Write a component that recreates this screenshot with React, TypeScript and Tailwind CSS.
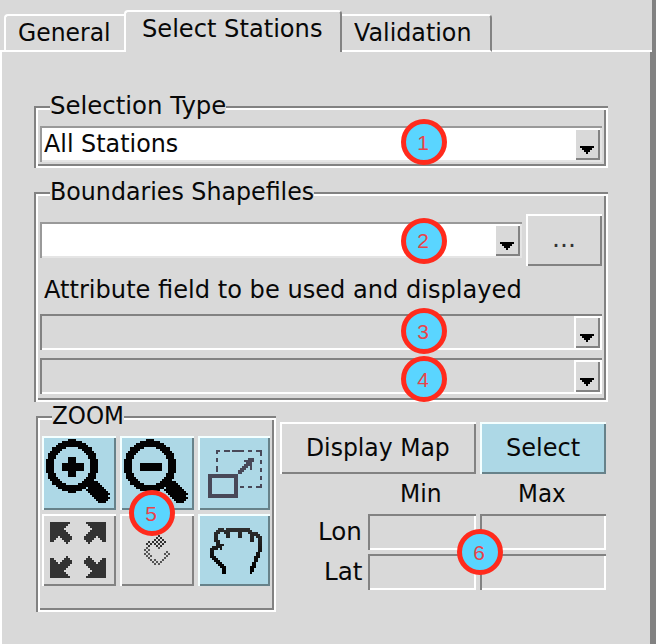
import React from "react";

const raised = "shadow-[inset_2px_2px_0_#fff,inset_-2px_-2px_0_#828282] bg-[#d9d9d9]";
const raisedBlue = "shadow-[inset_2px_2px_0_#f4ffff,inset_-2px_-2px_0_#67828a] bg-[#add8e6]";
const sunken = "shadow-[inset_2px_2px_0_#828282,inset_-2px_-2px_0_#fff] bg-[#d9d9d9]";
const sunkenWhite = "shadow-[inset_2px_2px_0_#999999,inset_-2px_-2px_0_#e5e5e5] bg-white";

function Label({ text, width, className = "" }: { text: string; width: number; className?: string }) {
  const ref = React.useRef<HTMLSpanElement>(null);
  const [scale, setScale] = React.useState(1);
  React.useLayoutEffect(() => {
    const el = ref.current;
    if (el) setScale(width / el.offsetWidth);
  }, [text, width]);
  return (
    <span className={`block h-7 whitespace-nowrap leading-7 ${className}`} style={{ width }}>
      <span ref={ref} className="inline-block origin-left" style={{ transform: `scaleX(${scale})` }}>{text}</span>
    </span>
  );
}

function Frame({ title, titleWidth, className, children }: { title: string; titleWidth: number; className: string; children: React.ReactNode }) {
  return (
    <section className={`relative shadow-[inset_2px_2px_0_#828282,inset_-2px_-2px_0_#fff,inset_4px_4px_0_#fff,inset_-4px_-4px_0_#828282] ${className}`}>
      <div className="absolute left-4 -top-[14px] h-5 bg-[#d9d9d9]">
        <Label text={title} width={titleWidth} />
      </div>
      {children}
    </section>
  );
}

function Combo({ value, enabled, className }: { value?: string; enabled?: boolean; className: string }) {
  return (
    <div className={`flex h-9 justify-between p-[2px] pl-1 ${enabled ? sunkenWhite : sunken} ${className}`}>
      <div className="pt-[2px]">{value && <Label text={value} width={134} />}</div>
      <div className={`flex h-8 w-[26px] items-end justify-center pb-[6px] ${raised}`}>
        <svg width="14" height="8" shapeRendering="crispEdges"><path d="M0 0h14v2h-2v2h-2v2h-2v2H6V6H4V4H2V2H0z" /></svg>
      </div>
    </div>
  );
}

const CELL = 2;

function Magnifier({ plus }: { plus?: boolean }) {
  const cells: React.ReactNode[] = [];
  for (let y = 0; y < 72; y += CELL) {
    for (let x = 0; x < 72; x += CELL) {
      const cx = x + 1, cy = y + 1;
      const d = Math.hypot(cx - 30, cy - 29);
      const along = (cx + cy - 92) / Math.SQRT2;
      const across = Math.abs(cx - cy - 1) / Math.SQRT2;
      const ring = d > 18.7 && d < 26.2;
      const handle = along > -2 && along < 26 && across < (along < 4 ? 4.5 : along > 23 ? 4.5 : 6.5);
      const bar = cx > 20 && cx < 42 && cy > 26 && cy < 34;
      const stem = !!plus && cx > 26 && cx < 34 && cy > 20 && cy < 40;
      if (ring || handle || bar || stem) cells.push(<rect key={`${x}-${y}`} x={x} y={y} width="2" height="2" />);
    }
  }
  return <svg width="72" height="72" shapeRendering="crispEdges" fill="#030303">{cells}</svg>;
}

// Each row lists the filled column ranges.
const FIST: number[][][] = [
  [[4, 6], [8, 19]], [[3, 20]], [[2, 4], [7, 9], [14, 15], [19, 23]], [[2, 3], [8, 9], [14, 15], [20, 24]],
  [[2, 3], [8, 9], [14, 15], [20, 21], [23, 25]], [[2, 3], [20, 21], [24, 25]], [[2, 4], [20, 21], [24, 25]],
  [[3, 4], [24, 25]], [[3, 6], [24, 25]], [[1, 5], [24, 25]], [[0, 3], [5, 5], [24, 25]], [[0, 1], [24, 25]],
  [[0, 1], [23, 24]], [[0, 1], [23, 24]], [[0, 2], [22, 24]], [[1, 3], [22, 23]], [[2, 4], [22, 23]], [[3, 5], [21, 22]],
  [[4, 6], [21, 22]], [[5, 7], [20, 22]], [[6, 7], [20, 21]], [[6, 7], [20, 21]], [[6, 7], [20, 20]],
];
const TURN: number[][] = [[7], [6, 8], [5, 7, 9], [2, 4, 6, 8, 10], [1, 3, 5, 7, 9], [2, 6, 8], [1, 7], [0, 2], [1, 11], [0, 2, 10, 12], [1, 3, 11], [2, 10], [3, 5, 9], [4, 6, 8], [5, 7]];

function Fist() {
  return (
    <svg width="52" height="46" shapeRendering="crispEdges">
      {FIST.map((row, y) => row.map(([a, b]) => {
        const v = Math.max(0, Math.round(46 - y * 2.3));
        return <rect key={`${y}-${a}`} x={a * 2} y={y * 2} width={(b - a + 1) * 2} height="2" fill={`rgb(${v},${v},${v})`} />;
      }))}
    </svg>
  );
}

function Refresh() {
  return (
    <svg width="26" height="30" shapeRendering="crispEdges">
      {TURN.map((row, y) => row.map((x) => <rect key={`${y}-${x}`} x={x * 2} y={y * 2} width="2" height="2" fill={y < 6 ? "#303030" : "#555"} />))}
    </svg>
  );
}

const ARROW = "M0 0H20V2H18V4H16V6H14V8H16V10H18V12H20V14H22V18H20V20H18V22H16V20H14V18H12V16H10V14H8V16H6V18H4V20H0Z";

function FitAll() {
  return (
    <svg width="56" height="56" shapeRendering="crispEdges" fill="#333">
      <path d={ARROW} />
      <path d={ARROW} transform="translate(56 0) scale(-1 1)" />
      <path d={ARROW} transform="translate(0 56) scale(1 -1)" />
      <path d={ARROW} transform="translate(56 56) scale(-1 -1)" />
    </svg>
  );
}

function Extent() {
  return (
    <svg width="54" height="48" shapeRendering="crispEdges" fill="#484858">
      <path d="M8 0h4v2H8zM16 0h6v2h-6zM24 0h6v2h-6zM30 0h6v2h-6zM40 0h4v2h-4zM48 0h6v2h-6zM52 2h2v4h-2zM52 10h2v4h-2zM52 18h2v4h-2zM52 26h2v4h-2zM52 34h2v4h-2zM48 36h4v2h-4zM40 36h4v2h-4zM32 36h4v2h-4zM8 0h2v4H8zM8 8h2v4H8zM8 16h2v6H8z" />
      <path fillRule="evenodd" d="M0 24h30v24H0zM4 28v16h22V28z" />
      <path d="M30 20h2v-2h2v-2h2v-2h2v-2h-2v-2h4V8h6v4h-2v8h-2v-4h-2v2h-2v2h-2v2h-2v2h-4z" />
    </svg>
  );
}

function Marker({ n, className }: { n: number; className: string }) {
  return (
    <div className={`absolute flex h-[46px] w-[46px] items-center justify-center rounded-full border-[5px] border-[#ff2b1d] bg-[#5ad5ff] pr-px font-['Liberation_Sans',sans-serif] text-[21px] leading-none text-[#e8434a] ${className}`}>
      {n}
    </div>
  );
}

export default function App() {
  return (
    <main className="relative flex h-[644px] w-[656px] overflow-hidden bg-[#d9d9d9] font-['DejaVu_Sans',sans-serif] text-[24px] text-[#080808]">
      <div className="flex w-[652px] flex-col">
        <nav className="flex h-[52px] shrink-0 items-end">
          <div className="h-[2px] w-1 self-end bg-white" />
          <div className="h-[38px] w-[120px] rounded-tl-[4px] border-b-2 border-l-2 border-t-2 border-white pl-[12px] pt-[3px]">
            <Label text="General" width={93} />
          </div>
          <div className="h-[42px] w-[218px] rounded-t-[4px] border-l-2 border-r-2 border-t-2 border-white border-r-[#828282] pl-4 pt-[3px]">
            <Label text="Select Stations" width={181} />
          </div>
          <div className="h-[38px] w-[150px] rounded-tr-[4px] border-b-2 border-r-2 border-t-2 border-white border-r-[#828282] pl-3 pt-[3px]">
            <Label text="Validation" width={118} />
          </div>
          <div className="h-[2px] flex-1 bg-white" />
        </nav>
        <div className="flex-1 border-l-2 border-r-2 border-white border-r-[#828282] pl-8 pt-[54px]">
          <Frame title="Selection Type" titleWidth={176} className="h-[62px] w-[574px] pl-[6px] pt-5">
            <Combo value="All Stations" enabled className="w-[562px]" />
          </Frame>
          <Frame title="Boundaries Shapefiles" titleWidth={264} className="mt-6 h-[210px] w-[574px] pl-[6px] pt-[22px]">
            <div className="flex gap-1">
              <Combo enabled className="mt-2 w-[482px]" />
              <button className={`flex h-[52px] w-[76px] justify-center pr-[2px] pt-[11px] text-[#333] ${raised}`}><Label text="..." width={24} /></button>
            </div>
            <div className="ml-1 mt-[10px]"><Label text="Attribute field to be used and displayed" width={478} /></div>
            <Combo className="mt-[10px] w-[562px]" />
            <Combo className="mt-2 w-[562px]" />
          </Frame>
          <div className="flex">
            <Frame title="ZOOM" titleWidth={72} className="ml-[2px] mt-[14px] h-[196px] w-[240px] shrink-0 pl-[6px] pt-5">
              <div className="grid grid-cols-[74px_74px_72px] grid-rows-[74px_72px] gap-1">
                <button className={raisedBlue}><Magnifier plus /></button>
                <button className={raisedBlue}><Magnifier /></button>
                <button className={`pl-[10px] pt-[14px] ${raisedBlue}`}><div className="h-[60px]"><Extent /></div></button>
                <button className={`flex items-start pl-2 pt-2 ${raised}`}><FitAll /></button>
                <button className={`flex items-start pl-6 pt-[21px] ${raised}`}><Refresh /></button>
                <button className={`flex items-start pl-3 pt-[14px] ${raisedBlue}`}><Fist /></button>
              </div>
            </Frame>
            <div className="ml-1 w-[326px] pt-5">
              <div className="flex gap-1">
                <button className={`flex h-[52px] w-[196px] pl-[26px] pt-[12px] text-left ${raised}`}><Label text="Display Map" width={144} /></button>
                <button className={`flex h-[52px] w-[126px] pl-[26px] pt-[12px] text-left ${raisedBlue}`}><Label text="Select" width={74} /></button>
              </div>
              <div className="flex h-10 pl-[120px] pt-[6px]">
                <Label text="Min" width={42} />
                <Label text="Max" width={48} className="ml-[76px]" />
              </div>
              <div className="flex h-10">
                <div className="flex w-[88px] justify-end pr-[6px] pt-[4px]"><Label text="Lon" width={44} /></div>
                <div className={`h-9 w-[108px] ${sunken}`} />
                <div className={`ml-1 h-9 w-[126px] ${sunken}`} />
              </div>
              <div className="flex h-9">
                <div className="flex w-[88px] justify-end pr-[5px] pt-[4px]"><Label text="Lat" width={39} /></div>
                <div className={`h-9 w-[108px] ${sunken}`} />
                <div className={`ml-1 h-9 w-[126px] ${sunken}`} />
              </div>
            </div>
          </div>
        </div>
      </div>
      <div className="w-1 bg-[#828282]" />
      <Marker n={1} className="left-[400.5px] top-[119.3px]" />
      <Marker n={2} className="left-[400.5px] top-[217.5px]" />
      <Marker n={3} className="left-[400.5px] top-[308.3px]" />
      <Marker n={4} className="left-[400.5px] top-[356.3px]" />
      <Marker n={5} className="left-[128.5px] top-[490.4px]" />
      <Marker n={6} className="left-[456.5px] top-[529.4px]" />
    </main>
  );
}
